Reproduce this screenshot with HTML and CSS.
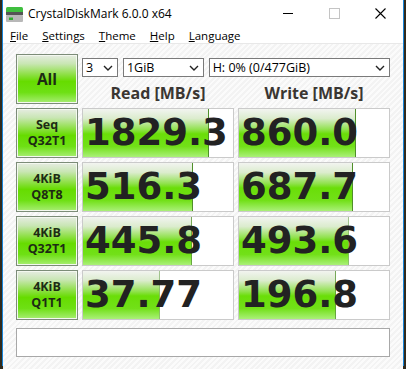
FILE: index.html
```html
<!DOCTYPE html>
<html>
<head>
    <title>CrystalDiskMark 6.0.0 x64</title>
    <link rel="stylesheet" href="styles.css">
</head>
<body>
    <!-- the application window -->
    <div class="window">
        <div class="titlebar">
            <svg class="app-icon" width="17" height="15" viewBox="0 0 17 15">
                <rect x="0" y="0" width="17" height="6" rx="1.5" fill="#3fbf3f"/>
                <rect x="0" y="5" width="17" height="3" fill="#555"/>
                <rect x="0" y="8" width="17" height="7" rx="1" fill="#b8b8b8"/>
                <rect x="3" y="10.5" width="4" height="2.5" fill="#2fae2f"/>
            </svg>
            <span class="title">CrystalDiskMark 6.0.0 x64</span>
            <div class="controls">
                <span class="ctl"><svg width="10" height="10"><path d="M0 5.5h10" stroke="#000" stroke-width="1"/></svg></span>
                <span class="ctl"><svg width="11" height="11"><rect x="0.5" y="0.5" width="10" height="10" fill="none" stroke="#c4c4c4"/></svg></span>
                <span class="ctl"><svg width="11" height="11"><path d="M0.5 0.5l10 10M10.5 0.5l-10 10" stroke="#000" stroke-width="1.1"/></svg></span>
            </div>
        </div>

        <div class="menubar">
            <span><u>F</u>ile</span>
            <span><u>S</u>ettings</span>
            <span><u>T</u>heme</span>
            <span><u>H</u>elp</span>
            <span><u>L</u>anguage</span>
        </div>

        <!-- the benchmark panel -->
        <div class="client">
            <div class="grid">
                <div class="btn all">All</div>
                <div class="top">
                    <div class="selects">
                        <div class="select s-count">3<svg width="10" height="6"><path d="M1 1l4 4 4-4" stroke="#222" stroke-width="1.4" fill="none"/></svg></div>
                        <div class="select s-size">1GiB<svg width="10" height="6"><path d="M1 1l4 4 4-4" stroke="#222" stroke-width="1.4" fill="none"/></svg></div>
                        <div class="select s-drive">H: 0% (0/477GiB)<svg width="10" height="6"><path d="M1 1l4 4 4-4" stroke="#222" stroke-width="1.4" fill="none"/></svg></div>
                    </div>
                    <div class="heads">
                        <div>Read [MB/s]</div>
                        <div>Write [MB/s]</div>
                    </div>
                </div>

                <div class="btn"><span>Seq</span><span>Q32T1</span></div>
                <div class="val" style="--w: 84%">1829.3</div>
                <div class="val" style="--w: 78%">860.0</div>

                <div class="btn"><span>4KiB</span><span>Q8T8</span></div>
                <div class="val" style="--w: 73.5%">516.3</div>
                <div class="val" style="--w: 76%">687.7</div>

                <div class="btn"><span>4KiB</span><span>Q32T1</span></div>
                <div class="val" style="--w: 72.5%">445.8</div>
                <div class="val" style="--w: 73%">493.6</div>

                <div class="btn"><span>4KiB</span><span>Q1T1</span></div>
                <div class="val" style="--w: 51%">37.77</div>
                <div class="val" style="--w: 64.5%">196.8</div>

                <div class="status"></div>
            </div>
        </div>
    </div>
</body>
</html>
```

FILE: styles.css
```css
/* desktop behind the window */
body {
    margin: 0;
    padding: 0;
    background: #2f2a1d;
    font-family: "Open Sans", sans-serif;
    height: 369px;
    overflow: hidden;
}

/* the window frame */
.window {
    margin-left: 2px;
    width: 400px;
    height: 365px;
    border: 1px solid #1883d7;
    border-top: 0;
    background: #fff;
    display: flex;
    flex-direction: column;
}

/* title bar */
.titlebar {
    height: 29px;
    display: flex;
    align-items: center;
    font-size: 12px;
    color: #000;
}
.app-icon {
    margin: 0 5px 0 3px;
}
.title {
    padding-bottom: 2px;
}
.controls {
    margin-left: auto;
    display: flex;
    height: 29px;
}
.ctl {
    width: 46px;
    display: flex;
    align-items: center;
    justify-content: center;
    padding-bottom: 3px;
}

/* menu bar */
.menubar {
    height: 14px;
    display: flex;
    gap: 14px;
    padding-left: 7px;
    font-size: 11.5px;
    line-height: 14px;
    border-bottom: 1px solid #e8e8e8;
    color: #000;
}

/* hatched client area */
.client {
    flex: 1;
    padding: 10px 12px 0 13px;
    background: repeating-linear-gradient(135deg, #f3f3f3 0 2px, #fbfbfb 2px 4px);
}
.grid {
    display: grid;
    grid-template-columns: 62px 152px 152px;
    grid-auto-rows: 50px;
    gap: 4px;
}

/* green test buttons */
.btn {
    box-sizing: border-box;
    border: 1px solid #7c8c78;
    box-shadow: inset 0 0 0 1px #f4f8f0;
    background: linear-gradient(to bottom, #e6ece2 0%, #c9e6b4 18%, #8fe048 40%, #66dc00 55%, #6ee014 78%, #a8ee74 100%);
    display: flex;
    flex-direction: column;
    align-items: center;
    justify-content: center;
    text-align: center;
    font-weight: 700;
    font-size: 12.5px;
    line-height: 16px;
    color: #1d2b14;
}
.btn.all {
    font-size: 15.5px;
}

/* selectors and headings */
.top {
    grid-column: 2 / 4;
    display: flex;
    flex-direction: column;
}
.selects {
    display: flex;
    gap: 5px;
    margin-top: 4px;
}
.select {
    box-sizing: border-box;
    height: 19px;
    border: 1px solid #7a7a7a;
    background: #fff;
    font-size: 12.5px;
    line-height: 17px;
    padding-left: 3px;
    display: flex;
    align-items: center;
    justify-content: space-between;
    padding-right: 4px;
    color: #000;
}
.s-count { width: 36px; }
.s-size { width: 81px; }
.s-drive { width: 182px; }

.heads {
    display: grid;
    grid-template-columns: 152px 152px;
    gap: 4px;
    margin-top: 6px;
    text-align: center;
    font-weight: 700;
    font-size: 16px;
    line-height: 20px;
    color: #3a3632;
}

/* result cells with their bar */
.val {
    box-sizing: border-box;
    border: 1px solid #cacaca;
    background-color: #fff;
    background-image:
        linear-gradient(to left, #4f8f2a 1px, transparent 1px),
        linear-gradient(to bottom, #f2f4f0 0%, #dbeccd 20%, #93e252 42%, #6ade08 52%, #72e018 78%, #aaf078 100%);
    background-size: var(--w) 100%;
    background-repeat: no-repeat;
    font-family: "DejaVu Sans", sans-serif;
    font-weight: 700;
    font-size: 37px;
    line-height: 48px;
    padding-left: 2px;
    color: #222;
    white-space: nowrap;
    overflow: hidden;
}

.status {
    grid-column: 1 / 4;
    height: 29px;
    margin-top: 4px;
    box-sizing: border-box;
    border: 1px solid #a8a8a8;
    background: #fff;
}
```
